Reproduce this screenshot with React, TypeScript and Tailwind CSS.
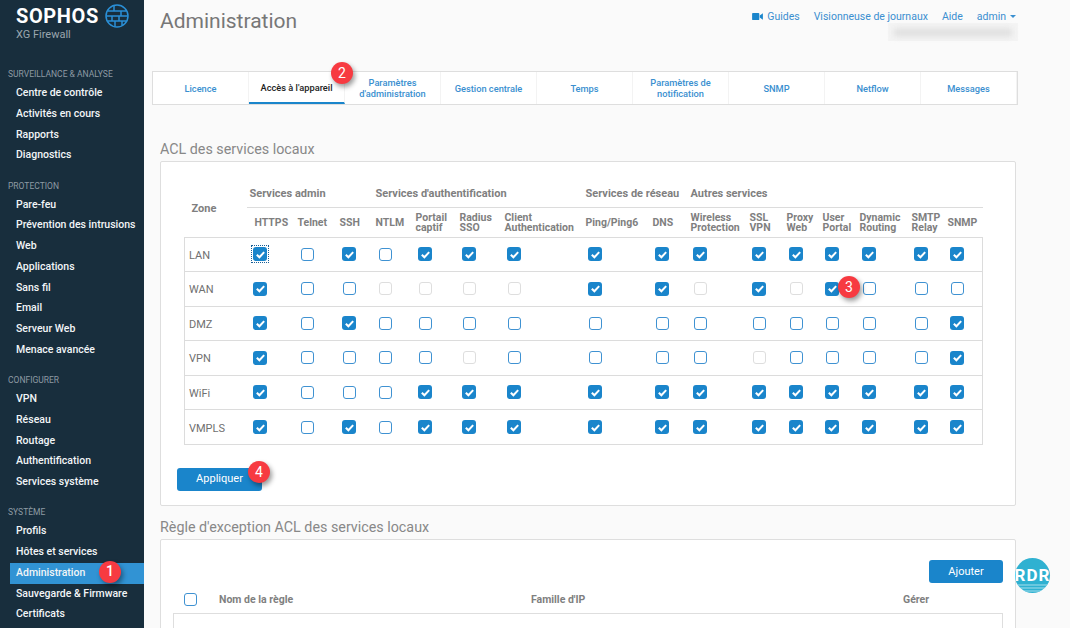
import React from "react";

const navSections = [
  { title: "Surveillance & analyse", items: ["Centre de contrôle", "Activités en cours", "Rapports", "Diagnostics"] },
  {
    title: "Protection",
    items: ["Pare-feu", "Prévention des intrusions", "Web", "Applications", "Sans fil", "Email", "Serveur Web", "Menace avancée"],
  },
  { title: "Configurer", items: ["VPN", "Réseau", "Routage", "Authentification", "Services système"] },
  { title: "Système", items: ["Profils", "Hôtes et services", "Administration", "Sauvegarde & Firmware", "Certificats"] },
];

const tabs = [
  "Licence",
  "Accès à l'appareil",
  "Paramètres d'administration",
  "Gestion centrale",
  "Temps",
  "Paramètres de notification",
  "SNMP",
  "Netflow",
  "Messages",
];

const columns = [
  { label: ["HTTPS"], width: "w-[47px]" },
  { label: ["Telnet"], width: "w-[42px]" },
  { label: ["SSH"], width: "w-[36px]" },
  { label: ["NTLM"], width: "w-[40px]" },
  { label: ["Portail", "captif"], width: "w-[44px]" },
  { label: ["Radius", "SSO"], width: "w-[45px]" },
  { label: ["Client", "Authentication"], width: "w-[81px]" },
  { label: ["Ping/Ping6"], width: "w-[67px]" },
  { label: ["DNS"], width: "w-[38px]" },
  { label: ["Wireless", "Protection"], width: "w-[59px]" },
  { label: ["SSL", "VPN"], width: "w-[37px]" },
  { label: ["Proxy", "Web"], width: "w-[36px]" },
  { label: ["User", "Portal"], width: "w-[37px]" },
  { label: ["Dynamic", "Routing"], width: "w-[52px]" },
  { label: ["SMTP", "Relay"], width: "w-[36px]" },
  { label: ["SNMP"], width: "w-[39px]" },
];

// 1 = checked, 0 = empty, d = disabled
const zones = [
  { name: "LAN", values: "1010111111111111" },
  { name: "WAN", values: "100dddd11d1d1000" },
  { name: "DMZ", values: "1010000000000001" },
  { name: "VPN", values: "10000d0000d00001" },
  { name: "WiFi", values: "1000111111111111" },
  { name: "VMPLS", values: "1010111111111111" },
];

function Box({ state, focused }: { state: string; focused?: boolean }) {
  const box =
    state === "1" ? (
      <span className="flex h-[14px] w-[14px] items-center justify-center rounded-[3px] bg-[#1a85cb]">
        <svg viewBox="0 0 12 12" className="h-[11px] w-[11px]" fill="none" stroke="#fff" strokeWidth="2.2">
          <path d="M2 6.2 L4.8 9 L10 3.4" />
        </svg>
      </span>
    ) : (
      <span className="flex h-[14px] w-[14px] items-center justify-center">
        <span
          className={`block h-[13px] w-[13px] rounded-[3px] border-[1.5px] bg-white ${
            state === "d" ? "border-[#dedede]" : "border-[#3f92d2]"
          }`}
        />
      </span>
    );
  return (
    <span className={`inline-flex align-middle ${focused ? "outline-1 outline-dotted outline-offset-1 outline-[#1a5f96]" : ""}`}>
      {box}
    </span>
  );
}

function Badge({ n, className }: { n: number; className: string }) {
  return (
    <span
      className={`absolute z-10 flex h-[22px] w-[22px] items-center justify-center rounded-full bg-[#f73a41] text-[14px] text-white shadow-[2px_3px_5px_rgba(0,0,0,0.4)] ${className}`}
    >
      {n}
    </span>
  );
}

function SophosMark() {
  return (
    <svg viewBox="0 0 24 24" className="h-[24px] w-[24px]" fill="none" stroke="#2a8fd6" strokeWidth="1.5">
      <circle cx="12" cy="12" r="11" />
      <path d="M2.5 7 H21.5 M1 12 H23 M2.5 17 H21.5 M9 1.5 V7 M16 7 V12 M7 12 V17 M14 12 V17 M10 17 V22.5 M17 17 V21" />
    </svg>
  );
}

export default function App() {
  return (
    <div className="flex h-[628px] w-[1070px] overflow-hidden bg-[#fafafa] [font-family:Roboto,sans-serif]">
      <aside className="h-full w-[144px] shrink-0 bg-[#182e3d]">
        <div className="flex h-[54.5px] items-start gap-[6px] pl-[16px] pt-[4px]">
          <div>
            <div className="text-[20px] leading-[24px] font-bold tracking-[0.6px] text-white">SOPHOS</div>
            <div className="text-[11px] leading-[13px] text-[#9aa6ae]">XG Firewall</div>
          </div>
          <SophosMark />
        </div>
        {navSections.map((section) => (
          <div key={section.title} className="mt-[13.5px]">
            <div className="mb-[2px] h-[13px] pl-[8px] text-[8.5px] leading-[13px] text-[#8e9ba4] uppercase">
              {section.title}
            </div>
            {section.items.map((item) => (
              <div
                key={item}
                className={`relative ml-[10px] h-[20.75px] pl-[6px] text-[10.5px] leading-[20.75px] font-medium text-[#f2f5f7] ${
                  item === "Administration" ? "bg-[#3193d4]" : ""
                }`}
              >
                {item}
                {item === "Administration" && <Badge n={1} className="top-[-2px] left-[89px]" />}
              </div>
            ))}
          </div>
        ))}
      </aside>

      <main className="relative flex-1 pl-[8px]">
        <div className="w-[866px]">
          <header className="flex h-[71px] items-start justify-between pl-[8px]">
            <h1 className="pt-[6px] text-[21px] leading-[30px] font-normal text-[#777]">Administration</h1>
            <div className="flex flex-col items-end">
              <div className="flex items-center pt-[10px] pr-[2px] text-[10.5px] leading-[13px] text-[#3a8fd0]">
                <svg viewBox="0 0 12 10" className="mr-[4px] h-[9px] w-[11px]" fill="#1a85cb">
                  <rect x="0" y="1" width="8" height="8" rx="1" />
                  <path d="M8.5 4 L12 1.5 V8.5 L8.5 6 Z" />
                </svg>
                <span>Guides</span>
                <span className="ml-[14px]">Visionneuse de journaux</span>
                <span className="ml-[14px]">Aide</span>
                <span className="ml-[14px]">admin</span>
                <span className="ml-[4px] h-0 w-0 border-x-[3px] border-t-[3px] border-x-transparent border-t-[#3a8fd0]" />
              </div>
              <div className="flex h-[18px] w-[130px] items-center justify-center bg-[#f4f4f4]">
                <div className="h-[7px] w-[118px] bg-[#dcdcdc] blur-[3px]" />
              </div>
            </div>
          </header>

          <nav className="relative flex h-[34px] border border-[#dedede] bg-white">
            {tabs.map((tab, i) => (
              <div
                key={tab}
                className={`flex w-[96px] flex-1 items-center justify-center border-r border-[#f3f3f3] px-[8px] text-center text-[9.25px] leading-[11px] font-medium last:border-r-0 ${
                  i === 1 ? "border-b-2 border-b-[#1a85cb] text-[#222]" : "text-[#3a8fd0]"
                }`}
              >
                {tab}
              </div>
            ))}
            <Badge n={2} className="top-[-10px] left-[178px]" />
          </nav>

          <section className="ml-[8px] w-[856px]">
            <h2 className="mt-[35px] h-[21px] text-[14.3px] leading-[18px] font-normal text-[#888]">ACL des services locaux</h2>
            <div className="relative h-[345px] rounded-[2px] border border-[#dedede] bg-white pt-[18px] pl-[23px]">
              <table className="table-fixed border-collapse text-left text-[#7f7f7f]">
                <thead>
                  <tr className="h-[27px] text-[11px] font-bold">
                    <th rowSpan={2} className="w-[62px] border-b border-[#dcdcdc] pt-[2px] pl-[7px] text-left font-bold">
                      Zone
                    </th>
                    <th colSpan={3} className="border-b border-[#dcdcdc] pt-[2px] pl-[3px] font-bold">Services admin</th>
                    <th colSpan={4} className="border-b border-[#dcdcdc] pt-[2px] pl-[4px] font-bold">Services d'authentification</th>
                    <th colSpan={2} className="border-b border-[#dcdcdc] pt-[2px] pl-[4px] font-bold whitespace-nowrap">Services de réseau</th>
                    <th colSpan={7} className="border-b border-[#dcdcdc] pt-[2px] pl-[4px] font-bold">Autres services</th>
                  </tr>
                  <tr className="h-[30px]">
                    {columns.map((col, i) => (
                      <th
                        key={col.label[0]}
                        className={`${col.width} border-b border-[#dcdcdc] pt-[2px] text-[10.5px] leading-[10px] font-bold whitespace-nowrap ${
                          i === 0 ? "pl-[8px]" : "pl-[4px]"
                        }`}
                      >
                        {col.label.map((line) => (
                          <div key={line}>{line}</div>
                        ))}
                      </th>
                    ))}
                  </tr>
                </thead>
                <tbody>
                  {zones.map((zone) => (
                    <tr key={zone.name} className="h-[34.6px] border border-[#dcdcdc]">
                      <td className="pt-[3px] pl-[4px] text-[11px] text-[#6f6f6f]">{zone.name}</td>
                      {zone.values.split("").map((v, i) => (
                        <td key={i} className="pb-[2px] pl-[6.5px] leading-none">
                          <Box state={v} focused={zone.name === "LAN" && i === 0} />
                        </td>
                      ))}
                    </tr>
                  ))}
                </tbody>
              </table>
              <div className="relative mt-[20px] ml-[-7px] w-[85px]">
                <button className="h-[23px] w-[85px] rounded-[3px] bg-[#1a85cb] text-[11px] text-white">Appliquer</button>
                <Badge n={4} className="top-[-4px] left-[71px]" />
              </div>
              <Badge n={3} className="top-[114px] left-[677px]" />
            </div>
          </section>

          <section className="ml-[8px] w-[856px]">
            <h2 className="mt-[12px] h-[21px] text-[14.3px] leading-[18px] font-normal text-[#888]">
              Règle d'exception ACL des services locaux
            </h2>
            <div className="h-[100px] rounded-[2px] border border-[#dedede] bg-white px-[12px] pt-[20px]">
              <div className="flex justify-end">
                <button className="h-[23px] w-[74px] rounded-[3px] bg-[#1a85cb] pt-[2px] text-[11px] text-white">Ajouter</button>
              </div>
              <div className="mt-[6px] flex h-[21px] items-center text-[10.5px] font-bold text-[#7f7f7f]">
                <span className="ml-[10px] flex">
                  <Box state="0" />
                </span>
                <span className="ml-[22px] w-[312px]">Nom de la règle</span>
                <span className="w-[372px]">Famille d'IP</span>
                <span>Gérer</span>
              </div>
              <div className="mt-[3px] h-[40px] border border-[#dedede]" />
            </div>
          </section>
        </div>

        <div className="absolute top-[558px] left-[871px] flex h-[35px] w-[35px] items-center justify-center overflow-hidden rounded-full bg-[#2fb1d1]">
          <span className="z-10 text-[17px] font-bold tracking-[1px] whitespace-nowrap text-white">RDR</span>
          <svg viewBox="0 0 35 10" className="absolute bottom-0 left-0 h-[10px] w-[35px]" stroke="#a6deec" strokeWidth="1">
            <path d="M0 2 H35 M3 5 H32 M8 8 H27" />
          </svg>
        </div>
      </main>
    </div>
  );
}
